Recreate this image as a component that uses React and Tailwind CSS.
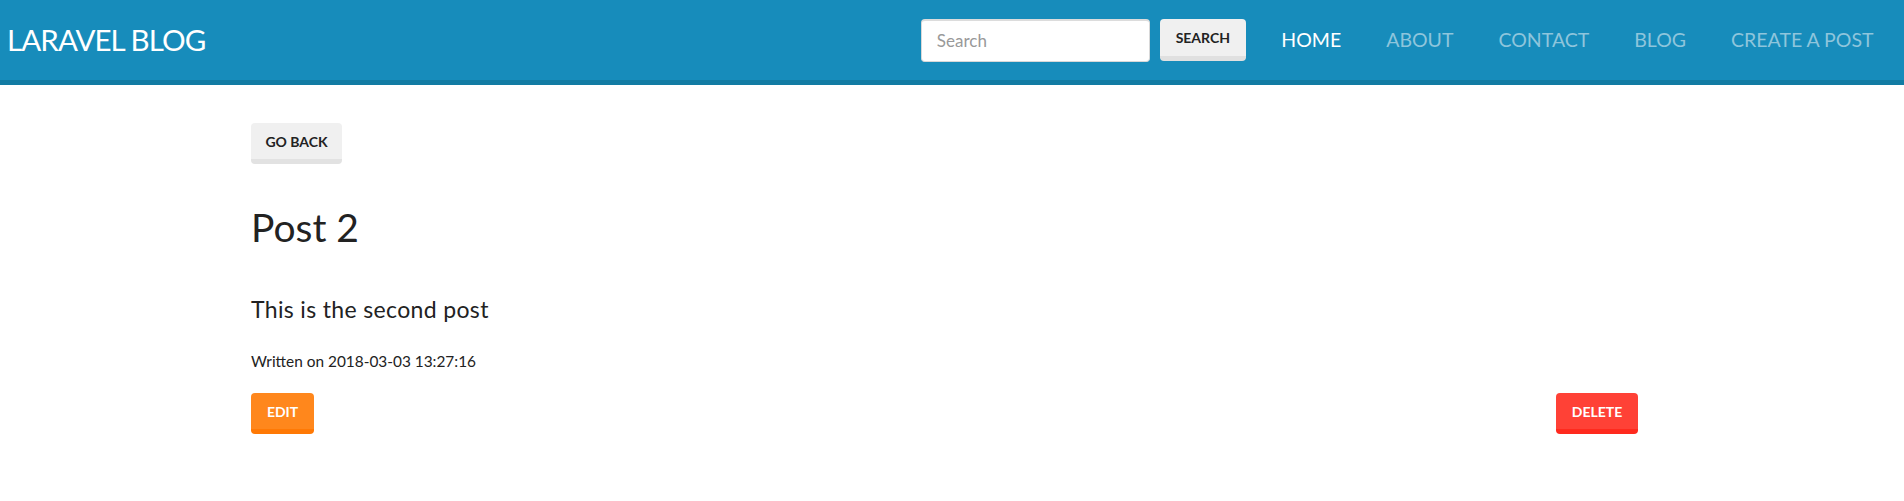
import React from "react";

const links = ["HOME", "ABOUT", "CONTACT", "BLOG", "CREATE A POST"];

const App = () => {
  return (
    <div className="min-h-[501px] bg-white text-[#222222] font-['Lato',sans-serif]">
      <nav className="h-[85px] bg-[#178cbb] border-b-[5px] border-[#127ba3] flex items-stretch">
        <a className="pl-[7px] leading-[80px] text-[29.5px] text-white tracking-[-0.9px]">LARAVEL BLOG</a>
        <div className="ml-auto flex items-center pr-[8px]">
          <form className="flex items-center" onSubmit={(e) => e.preventDefault()}>
            <input
              type="text"
              placeholder="Search"
              className="w-[229px] h-[43px] rounded-[4px] bg-white border border-[#d8d8d8] border-t-[2px] border-t-[#dcdcdc] px-[15px] text-[17px] text-[#555] placeholder:text-[#999] outline-none"
            />
            <button className="ml-[10px] w-[86px] h-[42px] rounded-[4px] bg-[#f0f0f0] border-b-[5px] border-[#e0e0e0] text-[14px] font-bold text-[#222]">
              SEARCH
            </button>
          </form>
          <ul className="ml-[13px] flex items-center">
            {links.map((l, i) => (
              <li key={l}>
                <a
                  className={
                    "block px-[22.5px] leading-[80px] text-[19.5px] " +
                    (i === 0 ? "text-white" : "text-[#8ec5dc]")
                  }
                >
                  {l}
                </a>
              </li>
            ))}
          </ul>
        </div>
      </nav>

      <div className="ml-[251px] w-[1387px] pt-[38px]">
        <button className="w-[91px] h-[41px] rounded-[4px] bg-[#f0f0f0] border-b-[5px] border-[#e2e2e2] text-[14px] font-bold text-[#222]">
          GO BACK
        </button>
        <h1 className="mt-[41px] text-[39px] leading-[44px] font-normal">Post 2</h1>
        <div className="mt-[45px] text-[23px] leading-[30px] tracking-[0.35px]">This is the second post</div>
        <small className="block mt-[26px] text-[15.4px] leading-[22px]">Written on 2018-03-03 13:27:16</small>
        <div className="mt-[21px] flex justify-between">
          <button className="w-[63px] h-[41px] rounded-[4px] bg-[#ff871c] border-b-[5px] border-[#ff7905] text-[14px] font-bold text-white">
            EDIT
          </button>
          <button className="w-[82px] h-[41px] rounded-[4px] bg-[#ff4136] border-b-[5px] border-[#ff2a1e] text-[14px] font-bold text-white">
            DELETE
          </button>
        </div>
      </div>
    </div>
  );
};

export default App;
